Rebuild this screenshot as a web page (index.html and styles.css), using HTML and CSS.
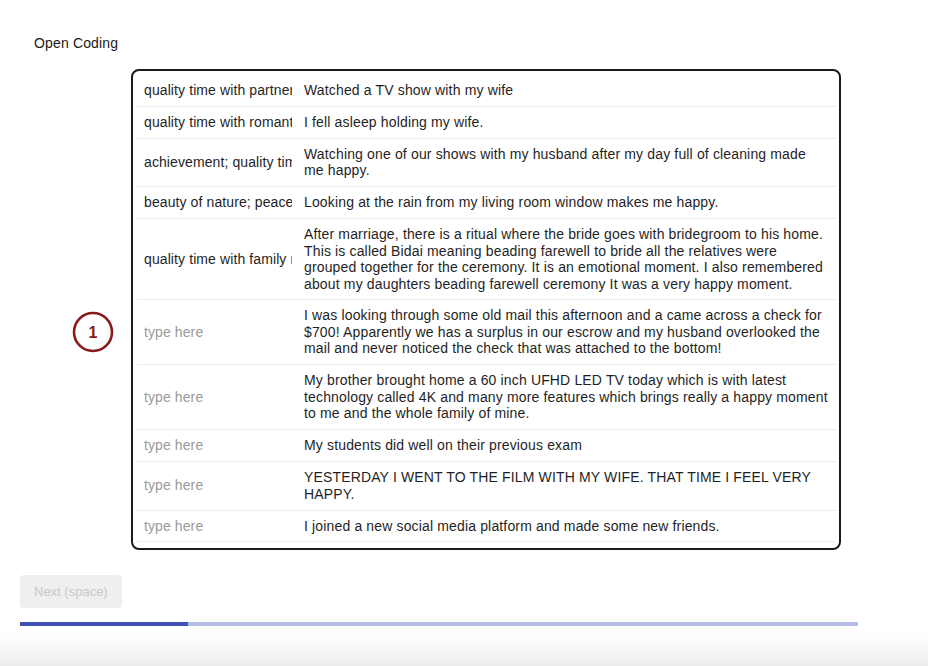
FILE: index.html
```html
<!DOCTYPE html>
<html lang="en">
<head>
<meta charset="utf-8">
<title>Open Coding</title>
<link rel="stylesheet" href="styles.css">
</head>
<body>
<div class="page">
  <div class="title">Open Coding</div>
  <div class="card">
    <table class="codes">
      <tbody>
        <tr><td class="code"><input class="code-input" value="quality time with partner"></td><td class="text">Watched a TV show with my wife</td></tr>
        <tr><td class="code"><input class="code-input" value="quality time with romantic partner"></td><td class="text">I fell asleep holding my wife.</td></tr>
        <tr><td class="code"><input class="code-input" value="achievement; quality time"></td><td class="text">Watching one of our shows with my husband after my day full of cleaning made<br>me happy.</td></tr>
        <tr><td class="code"><input class="code-input" value="beauty of nature; peace"></td><td class="text">Looking at the rain from my living room window makes me happy.</td></tr>
        <tr><td class="code"><input class="code-input" value="quality time with family members"></td><td class="text">After marriage, there is a ritual where the bride goes with bridegroom to his home.<br>This is called Bidai meaning beading farewell to bride all the relatives were<br>grouped together for the ceremony. It is an emotional moment. I also remembered<br>about my daughters beading farewell ceremony It was a very happy moment.</td></tr>
        <tr><td class="code marked"><span class="marker"><svg width="42" height="42" viewBox="0 0 42 42"><circle cx="21" cy="21" r="19" fill="#fff" stroke="#8b1a1a" stroke-width="2.6"/><text x="21" y="26.5" text-anchor="middle" class="marker-num">1</text></svg></span><input class="code-input" placeholder="type here"></td><td class="text">I was looking through some old mail this afternoon and a came across a check for<br>$700! Apparently we has a surplus in our escrow and my husband overlooked the<br>mail and never noticed the check that was attached to the bottom!</td></tr>
        <tr><td class="code"><input class="code-input" placeholder="type here"></td><td class="text">My brother brought home a 60 inch UFHD LED TV today which is with latest<br>technology called 4K and many more features which brings really a happy moment<br>to me and the whole family of mine.</td></tr>
        <tr><td class="code"><input class="code-input" placeholder="type here"></td><td class="text">My students did well on their previous exam</td></tr>
        <tr><td class="code"><input class="code-input" placeholder="type here"></td><td class="text">YESTERDAY I WENT TO THE FILM WITH MY WIFE. THAT TIME I FEEL VERY<br>HAPPY.</td></tr>
        <tr><td class="code"><input class="code-input" placeholder="type here"></td><td class="text">I joined a new social media platform and made some new friends.</td></tr>
      </tbody>
    </table>
  </div>
  <div class="actions">
    <button class="next-btn" disabled>Next (space)</button>
  </div>
  <div class="progress"><div class="progress-fill" style="width: 20%"></div></div>
</div>
<div class="bottom-shade"></div>
</body>
</html>
```

FILE: styles.css
```css
html, body {
  margin: 0;
  padding: 0;
  background: #ffffff;
}
body {
  font-family: "Liberation Sans", Arial, Helvetica, sans-serif;
  color: #1f1f1f;
  font-size: 14px;
}
.page {
  padding: 0 20px;
}
.title {
  padding: 35px 0 0 14px;
  font-size: 14px;
  line-height: 17px;
  color: #1a1a1a;
  letter-spacing: 0.15px;
}
.card {
  margin: 17px 0 0 111px;
  width: 710px;
  box-sizing: border-box;
  border: 2px solid #1a1a1a;
  border-radius: 8px;
  padding: 4px 3px 6px 4px;
}
.codes {
  width: 100%;
  border-collapse: collapse;
}
.codes td {
  border-bottom: 1px solid #ececec;
  padding: 7px 7px 7.4px;
  line-height: 16.5px;
  vertical-align: middle;
  font-size: 14px;
  letter-spacing: 0.15px;
}
.codes td.code {
  width: 148px;
  padding-right: 5px;
  position: relative;
}
.code-input {
  display: block;
  width: 148px;
  border: none;
  outline: none;
  padding: 0;
  margin: 0;
  background: transparent;
  font-family: "Liberation Sans", Arial, Helvetica, sans-serif;
  font-size: 14px;
  line-height: 16.5px;
  letter-spacing: 0.1px;
  color: #1f1f1f;
}
.code-input::placeholder {
  color: #9a9a9a;
}
.text {
  color: #1f1f1f;
  white-space: nowrap;
}
.marker {
  position: absolute;
  left: -65px;
  top: 50%;
  transform: translateY(-50%);
  width: 42px;
  height: 42px;
}
.marker svg {
  display: block;
}
.marker-num {
  font-family: "Liberation Sans", Arial, sans-serif;
  font-size: 16px;
  font-weight: bold;
  fill: #8b1a1a;
}
.actions {
  margin-top: 25px;
}
.next-btn {
  height: 33px;
  padding: 0 14px;
  border: none;
  border-radius: 4px;
  background: #efefef;
  color: #c9c9c9;
  font-family: "Liberation Sans", Arial, sans-serif;
  font-size: 13px;
}
.progress {
  margin-top: 14px;
  width: 838px;
  height: 4px;
  background: #b7bde6;
}
.progress-fill {
  height: 100%;
  background: #3f51b5;
}
.bottom-shade {
  position: fixed;
  left: 0;
  right: 0;
  bottom: 0;
  height: 30px;
  background: linear-gradient(to bottom, rgba(0,0,0,0), rgba(0,0,0,0.075));
}
```
